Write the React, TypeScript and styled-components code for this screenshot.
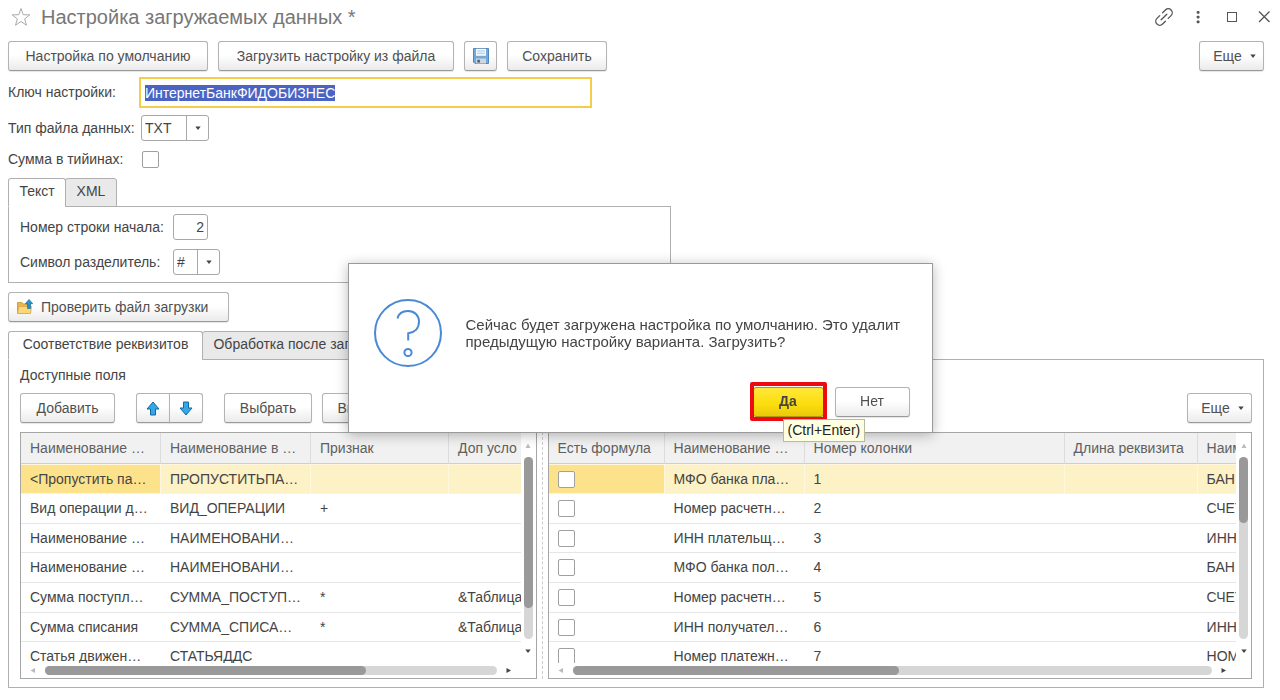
import React, { useEffect, useRef } from 'react';
import styled, { createGlobalStyle } from 'styled-components';

const GlobalStyle = createGlobalStyle`
  *, *::before, *::after { box-sizing: border-box; }
  body {
    margin: 0;
    background: #fff;
    color: #444;
    font-family: "Liberation Sans", Arial, sans-serif;
    font-size: 14px;
    line-height: 17px;
  }
  button, input, select { font: inherit; color: inherit; margin: 0; }
`;

const Page = styled.main`
  display: flex;
  flex-direction: column;
  padding: 0 16px 12px 8px;
`;

const TitleBar = styled.header`
  display: flex;
  align-items: center;
  justify-content: space-between;
  height: 34px;
  margin-right: -10px;
`;

const TitleGroup = styled.div`
  display: flex;
  align-items: center;
  gap: 9px;
  padding-left: 2px;
`;

const Title = styled.h1`
  margin: 0;
  font-size: 20px;
  line-height: 24px;
  font-weight: 400;
  color: #777;
  white-space: nowrap;
`;

const WindowTools = styled.div`
  display: flex;
  align-items: center;
  gap: 14px;
`;

const IconButton = styled.button`
  display: flex;
  align-items: center;
  justify-content: center;
  padding: 0;
  border: 0;
  background: none;
  color: #555;
`;

const Toolbar = styled.div<{ $top?: number }>`
  display: flex;
  gap: 10px;
  margin-top: ${(p) => p.$top ?? 0}px;
`;

const Button = styled.button<{ $width?: number; $primary?: boolean }>`
  display: flex;
  flex: none;
  align-items: center;
  justify-content: center;
  gap: 8px;
  width: ${(p) => (p.$width ? `${p.$width}px` : 'auto')};
  height: 30px;
  padding: 0;
  border: 1px solid ${(p) => (p.$primary ? '#b59a00' : '#b3b3b3')};
  border-bottom-color: ${(p) => (p.$primary ? '#b59a00' : '#999')};
  border-radius: 3px;
  background: ${(p) =>
    p.$primary
      ? 'linear-gradient(#ffe83a, #fbdc0c 60%, #e9c90c)'
      : 'linear-gradient(#fff 45%, #ebebeb)'};
  box-shadow: 0 1px 1px rgba(0, 0, 0, 0.1);
  font-weight: ${(p) => (p.$primary ? 700 : 400)};
  color: ${(p) => (p.$primary ? '#444' : '#505050')};
  white-space: nowrap;
`;

const MoreButton = styled(Button)`
  margin-left: auto;
  padding-left: 6px;
`;

const FileButton = styled(Button)`
  justify-content: flex-start;
  padding-left: 8px;
`;

const Pair = styled.div`
  display: flex;
  margin: 0 11px;

  ${Button}:first-child { border-radius: 3px 0 0 3px; }
  ${Button}:last-child { border-radius: 0 3px 3px 0; margin-left: -1px; }
`;

const Form = styled.div`
  display: flex;
  flex-direction: column;
  gap: 9px;
  margin-top: 8px;
`;

const Row = styled.div<{ $label: number }>`
  display: grid;
  grid-template-columns: ${(p) => p.$label}px auto;
  justify-content: start;
  align-items: center;
  white-space: nowrap;
`;

const KeyInput = styled.input`
  width: 449px;
  height: 27px;
  padding: 0 4px;
  border: 0;
  outline: 2px solid #f5cd4b;
  &:focus { outline: 2px solid #f5cd4b; }
  &::selection { background: rgba(74, 99, 196, 0.996); color: #fff; }
`;

const NumberInput = styled.input`
  width: 35px;
  height: 26px;
  padding: 0 3px;
  border: 1px solid #a8a8a8;
  border-radius: 3px;
  text-align: right;
`;

const SelectBox = styled.div<{ $width: number }>`
  position: relative;
  width: ${(p) => p.$width}px;
  height: 26px;

  select {
    appearance: none;
    width: 100%;
    height: 100%;
    padding: 0 24px 0 3px;
    border: 1px solid #a8a8a8;
    border-radius: 3px;
    background: #fff;
  }
`;

const SelectArrow = styled.span`
  position: absolute;
  inset: 1px 0 1px auto;
  display: flex;
  align-items: center;
  justify-content: center;
  width: 23px;
  padding-right: 1px;
  border-left: 1px solid #a8a8a8;
  pointer-events: none;
`;

const Checkbox = styled.input`
  appearance: none;
  display: block;
  width: 17px;
  height: 17px;
  border: 1px solid #a0a0a0;
  border-radius: 2px;
  background: #fff;
`;

const CheckRow = styled(Row)`
  height: 19px;
`;

const Tabs = styled.div`
  display: flex;
  margin-bottom: -1px;
`;

const Tab = styled.button<{ $width: number; $active?: boolean }>`
  position: relative;
  width: ${(p) => p.$width}px;
  height: 29px;
  padding: 0 0 2px;
  border: 1px solid #b0b0b0;
  border-bottom-color: ${(p) => (p.$active ? '#fff' : '#b0b0b0')};
  border-radius: 3px 3px 0 0;
  background: ${(p) => (p.$active ? '#fff' : '#e9e9e9')};
  white-space: nowrap;
  & + & { margin-left: -1px; }
`;

const TextPanel = styled.section`
  display: flex;
  flex-direction: column;
  gap: 9px;
  width: 663px;
  padding: 7px 11px;
  border: 1px solid #b0b0b0;
`;

const MappingPanel = styled.section`
  padding: 7px 11px 8px;
  border: 1px solid #b0b0b0;
`;

const Caption = styled.h2`
  margin: 0;
  font-size: 14px;
  line-height: 17px;
  font-weight: 400;
`;

const Tables = styled.div`
  display: grid;
  grid-template-columns: 517fr 5px 705fr;
  column-gap: 3px;
  margin-top: 9px;
`;

const Splitter = styled.div`
  width: 1px;
  justify-self: center;
  border-left: 1px dashed #ccc;
`;

const Frame = styled.div`
  display: grid;
  grid-template-columns: minmax(0, 1fr) 15px;
  grid-template-rows: 230px 15px;
  border: 1px solid #a6a6a6;
`;

const Viewport = styled.div`
  overflow: hidden;
`;

const DataTable = styled.table<{ $width: number }>`
  width: ${(p) => p.$width}px;
  table-layout: fixed;
  border-collapse: separate;
  border-spacing: 0;

  th, td {
    padding: 0 0 0 9px;
    white-space: nowrap;
    text-align: left;
    font-weight: 400;
  }
  th {
    height: 31px;
    border-right: 1px solid #dcdcdc;
    border-bottom: 1px solid #cfcfcf;
    background: #f1f1f1;
    color: #606060;
  }
  td {
    height: 30px;
    border-bottom: 1px solid #e6e6e6;
  }
  tbody tr:nth-child(3n) td { height: 29px; }
  tbody tr:first-child td {
    border-top: 1px solid #fff6dd;
    border-right: 1px solid #fff7e0;
    border-bottom-color: #f6f3ea;
    background: #fdf1c6;
  }
  tbody tr:first-child td:first-child { background: #fce28b; }
`;

const Scroll = styled.div<{ $vertical?: boolean }>`
  display: grid;
  align-items: center;
  justify-items: center;
  ${(p) =>
    p.$vertical
      ? 'grid-template-rows: 24px minmax(0, 1fr) 24px;'
      : 'grid-template-columns: 24px minmax(0, 1fr) 24px;'}
`;

const Track = styled.div<{ $vertical?: boolean; $share: number }>`
  width: ${(p) => (p.$vertical ? '9px' : '100%')};
  height: ${(p) => (p.$vertical ? '100%' : '9px')};
  border-radius: 5px;
  background: #d6d6d6;

  &::before {
    content: '';
    display: block;
    width: ${(p) => (p.$vertical ? '100%' : `${p.$share}%`)};
    height: ${(p) => (p.$vertical ? `${p.$share}%` : '100%')};
    border-radius: 5px;
    background: #999;
  }
`;

const Overlay = styled.div`
  position: fixed;
  inset: 0;
  display: flex;
  align-items: center;
  justify-content: center;
  padding-bottom: 5px;
`;

const Dialog = styled.div`
  display: flex;
  flex-direction: column;
  justify-content: space-between;
  width: 585px;
  height: 170px;
  padding: 35px 22px 15px 25px;
  border: 1px solid #9a9a9a;
  background: #fff;
  box-shadow: 0 2px 12px rgba(0, 0, 0, 0.28);
`;

const Message = styled.div`
  display: flex;
  align-items: center;
  gap: 24px;

  p { width: 440px; margin: 0; font-size: 15px; }
`;

const Actions = styled.div`
  display: flex;
  justify-content: flex-end;
  gap: 11px;
`;

const Highlighted = styled.div`
  position: relative;

  &::before {
    content: '';
    position: absolute;
    inset: -5px -3px -4px;
    border: 4px solid #ee0a12;
    border-radius: 2px;
  }
`;

const Tooltip = styled.span`
  position: absolute;
  top: 32px;
  left: 30px;
  padding: 2px 4px;
  border: 1px solid #b9b9a0;
  background: #ffffe1;
  color: #222;
  white-space: nowrap;
`;

type Dir = 'up' | 'down' | 'left' | 'right';
const TRIANGLES: Record<Dir, string> = {
  up: 'M0.5 5L3 0.5L5.5 5Z',
  down: 'M0.3 0.5H5.7L3 4Z',
  left: 'M5 0V5L0.5 2.5Z',
  right: 'M0.5 0L5 2.5L0.5 5Z',
};

const Triangle = ({ dir = 'down', color = '#444' }: { dir?: Dir; color?: string }) => (
  <svg width="6" height="5" viewBox="0 0 6 5" aria-hidden="true">
    <path d={TRIANGLES[dir]} fill={color} />
  </svg>
);

const StarIcon = () => (
  <svg width="22" height="20" viewBox="0 0 22 20" fill="none" stroke="#aaa" strokeWidth="1">
    <path d="M11 1.5L13.2 7.7L19.8 7.9L14.6 11.9L16.5 18.2L11 14.5L5.5 18.2L7.4 11.9L2.2 7.9L8.8 7.7Z" />
  </svg>
);

const LinkIcon = () => (
  <svg width="20" height="20" viewBox="0 0 20 20" fill="none" stroke="#555" strokeWidth="1.3" strokeLinecap="round">
    <g transform="rotate(-45 10 10)">
      <path d="M8 6H4A4 4 0 0 0 4 14H8M12 6H16A4 4 0 0 1 16 14H12M6 10H14" />
    </g>
  </svg>
);

const DotsIcon = () => (
  <svg width="20" height="20" viewBox="0 0 20 20" fill="#555">
    <rect x="8.7" y="4" width="2.8" height="2.8" rx="0.8" />
    <rect x="8.7" y="8.7" width="2.8" height="2.8" rx="0.8" />
    <rect x="8.7" y="13.4" width="2.8" height="2.8" rx="0.8" />
  </svg>
);

const MaximizeIcon = () => (
  <svg width="20" height="20" viewBox="0 0 20 20" fill="none" stroke="#555">
    <rect x="5.5" y="5.5" width="9" height="9" />
  </svg>
);

const CloseIcon = () => (
  <svg width="18" height="20" viewBox="0 0 18 20" stroke="#555" strokeWidth="1.3">
    <path d="M3 4.500L13.500 15M13.500 4.500L3 15" />
  </svg>
);

const SaveIcon = () => (
  <svg width="16" height="16" viewBox="0 0 16 16">
    <path d="M0.5 0.5H15.5V15.5H2L0.5 14Z" fill="#74a8dc" stroke="#5486ba" />
    <rect x="3" y="0.8" width="10" height="7" fill="#f4f9fd" />
    <path d="M4.2 3H11.8M4.2 5.3H11.8" stroke="#a9c6df" />
    <rect x="3" y="10.500" width="10" height="5" fill="#cfd6db" />
    <rect x="4.300" y="11.800" width="2.600" height="2.800" fill="#52606e" />
  </svg>
);

const FolderIcon = () => (
  <svg width="16" height="16" viewBox="0 0 16 16">
    <path d="M0.5 14.5V3.5H5L6.5 5H13V14.5Z" fill="#e9b64c" stroke="#d3a142" />
    <path d="M0.5 14.5L2 7.5H14.5L13.5 14.5Z" fill="#fbd878" stroke="#d9aa4e" strokeWidth="0.8" />
    <path d="M12 0.5L15.7 4.7H13.4V9.5H10.6V4.7H8.3Z" fill="#2596d4" stroke="#13679c" strokeWidth="0.7" />
  </svg>
);

const ArrowIcon = ({ down }: { down?: boolean }) => (
  <svg width="14" height="15" viewBox="0 0 14 15">
    <path
      d={
        down
          ? 'M4.5 1H9.5V7H13L7 14L1 7H4.5Z'
          : 'M4.5 14H9.5V8H13L7 1L1 8H4.5Z'
      }
      fill="#35a6e6"
      stroke="#15699f"
      strokeLinejoin="round"
    />
  </svg>
);

const QuestionIcon = () => (
  <svg width="68" height="68" viewBox="0 0 68 68" fill="none" stroke="#4a8ad4" strokeWidth="2">
    <circle cx="34" cy="34" r="33" />
    <path d="M23.5 19.5C24.5 15 28.5 12 34 12C40.5 12 45 16.5 45 22.5C45 29.5 40.5 33.5 34.2 34.300V41.5" />
    <circle cx="34" cy="53.5" r="3.6" />
  </svg>
);

const More = () => (
  <MoreButton type="button" $width={65}>
    Еще <Triangle />
  </MoreButton>
);

interface GridProps {
  label: string;
  widths: number[];
  heads: string[];
  rows: React.ReactNode[][];
  vShare: number;
  hShare: number;
}

const Grid = ({ label, widths, heads, rows, vShare, hShare }: GridProps) => (
  <Frame>
    <Viewport>
      <DataTable $width={widths.reduce((a, b) => a + b, 0)} aria-label={label}>
        <colgroup>
          {widths.map((w, i) => (
            <col key={i} width={w} />
          ))}
        </colgroup>
        <thead>
          <tr>
            {heads.map((h, i) => (
              <th key={i} scope="col">{h}</th>
            ))}
          </tr>
        </thead>
        <tbody>
          {rows.map((r, i) => (
            <tr key={i}>
              {r.map((c, j) => (
                <td key={j}>{c}</td>
              ))}
            </tr>
          ))}
        </tbody>
      </DataTable>
    </Viewport>
    <Scroll $vertical>
      <Triangle dir="up" color="#bbb" />
      <Track $vertical $share={vShare} />
      <Triangle dir="down" />
    </Scroll>
    <Scroll>
      <Triangle dir="left" color="#bbb" />
      <Track $share={hShare} />
      <Triangle dir="right" />
    </Scroll>
  </Frame>
);

const FIELDS = [
  ['<Пропустить па…', 'ПРОПУСТИТЬПА…', '', ''],
  ['Вид операции д…', 'ВИД_ОПЕРАЦИИ', '+', ''],
  ['Наименование …', 'НАИМЕНОВАНИ…', '', ''],
  ['Наименование …', 'НАИМЕНОВАНИ…', '', ''],
  ['Сумма поступл…', 'СУММА_ПОСТУП…', '*', '&Таблица'],
  ['Сумма списания', 'СУММА_СПИСА…', '*', '&Таблица'],
  ['Статья движен…', 'СТАТЬЯДДС', '', ''],
];

const COLUMNS = [
  ['МФО банка пла…', 'БАН'],
  ['Номер расчетн…', 'СЧЕТ'],
  ['ИНН плательщ…', 'ИНН'],
  ['МФО банка пол…', 'БАН'],
  ['Номер расчетн…', 'СЧЕТ'],
  ['ИНН получател…', 'ИНН'],
  ['Номер платежн…', 'НОМ'],
].map(([name, code], i) => [
  <Checkbox key="c" type="checkbox" aria-label={`Есть формула: ${name}`} />,
  name,
  String(i + 1),
  '',
  code,
]);

export default function App() {
  const keyRef = useRef<HTMLInputElement>(null);

  useEffect(() => {
    keyRef.current?.focus();
    keyRef.current?.select();
  }, []);

  return (
    <>
      <GlobalStyle />
      <Page>
        <TitleBar>
          <TitleGroup>
            <IconButton type="button" aria-label="Избранное"><StarIcon /></IconButton>
            <Title>Настройка загружаемых данных *</Title>
          </TitleGroup>
          <WindowTools>
            <IconButton type="button" aria-label="Ссылка"><LinkIcon /></IconButton>
            <IconButton type="button" aria-label="Меню"><DotsIcon /></IconButton>
            <IconButton type="button" aria-label="Развернуть"><MaximizeIcon /></IconButton>
            <IconButton type="button" aria-label="Закрыть"><CloseIcon /></IconButton>
          </WindowTools>
        </TitleBar>

        <Toolbar $top={7}>
          <Button type="button" $width={200}>Настройка по умолчанию</Button>
          <Button type="button" $width={236}>Загрузить настройку из файла</Button>
          <Button type="button" $width={33} aria-label="Сохранить в файл"><SaveIcon /></Button>
          <Button type="button" $width={100}>Сохранить</Button>
          <More />
        </Toolbar>

        <Form>
          <Row $label={133}>
            <label htmlFor="key">Ключ настройки:</label>
            <KeyInput id="key" ref={keyRef} defaultValue="ИнтернетБанкФИДОБИЗНЕС" />
          </Row>
          <Row $label={133}>
            <label htmlFor="type">Тип файла данных:</label>
            <SelectBox $width={68}>
              <select id="type" defaultValue="TXT"><option>TXT</option></select>
              <SelectArrow><Triangle /></SelectArrow>
            </SelectBox>
          </Row>
          <CheckRow $label={134}>
            <label htmlFor="sum">Сумма в тийинах:</label>
            <Checkbox id="sum" type="checkbox" />
          </CheckRow>
          <div>
            <Tabs role="tablist">
              <Tab type="button" role="tab" aria-selected $active $width={58}>Текст</Tab>
              <Tab type="button" role="tab" $width={52}>XML</Tab>
            </Tabs>
            <TextPanel>
              <Row $label={153}>
                <label htmlFor="line">Номер строки начала:</label>
                <NumberInput id="line" defaultValue="2" />
              </Row>
              <Row $label={153}>
                <label htmlFor="sep">Символ разделитель:</label>
                <SelectBox $width={47}>
                  <select id="sep" defaultValue="#"><option>#</option></select>
                  <SelectArrow><Triangle /></SelectArrow>
                </SelectBox>
              </Row>
            </TextPanel>
          </div>
          <FileButton type="button" $width={221}><FolderIcon />Проверить файл загрузки</FileButton>
          <div>
            <Tabs role="tablist">
              <Tab type="button" role="tab" aria-selected $active $width={195}>Соответствие реквизитов</Tab>
              <Tab type="button" role="tab" $width={194}>Обработка после загрузки</Tab>
            </Tabs>
            <MappingPanel>
              <Caption>Доступные поля</Caption>
              <Toolbar $top={9}>
                <Button type="button" $width={95}>Добавить</Button>
                <Pair>
                  <Button type="button" $width={34} aria-label="Вверх"><ArrowIcon /></Button>
                  <Button type="button" $width={34} aria-label="Вниз"><ArrowIcon down /></Button>
                </Pair>
                <Button type="button" $width={88}>Выбрать</Button>
                <Button type="button" $width={98}>Выгрузить</Button>
                <More />
              </Toolbar>
              <Tables>
                <Grid
                  label="Доступные поля"
                  widths={[140, 150, 138, 138]}
                  heads={['Наименование …', 'Наименование в …', 'Признак', 'Доп усло']}
                  rows={FIELDS}
                  vShare={83}
                  hShare={71}
                />
                <Splitter />
                <Grid
                  label="Колонки файла"
                  widths={[116, 140, 260, 133, 140]}
                  heads={['Есть формула', 'Наименование …', 'Номер колонки', 'Длина реквизита', 'Наим']}
                  rows={COLUMNS}
                  vShare={36}
                  hShare={51}
                />
              </Tables>
            </MappingPanel>
          </div>
        </Form>
      </Page>

      <Overlay>
        <Dialog role="dialog" aria-modal="true" aria-labelledby="message">
          <Message>
            <QuestionIcon />
            <p id="message">
              Сейчас будет загружена настройка по умолчанию. Это удалит предыдущую настройку варианта. Загрузить?
            </p>
          </Message>
          <Actions>
            <Highlighted>
              <Button type="button" $width={71} $primary>Да</Button>
              <Tooltip role="tooltip">(Ctrl+Enter)</Tooltip>
            </Highlighted>
            <Button type="button" $width={75}>Нет</Button>
          </Actions>
        </Dialog>
      </Overlay>
    </>
  );
}
